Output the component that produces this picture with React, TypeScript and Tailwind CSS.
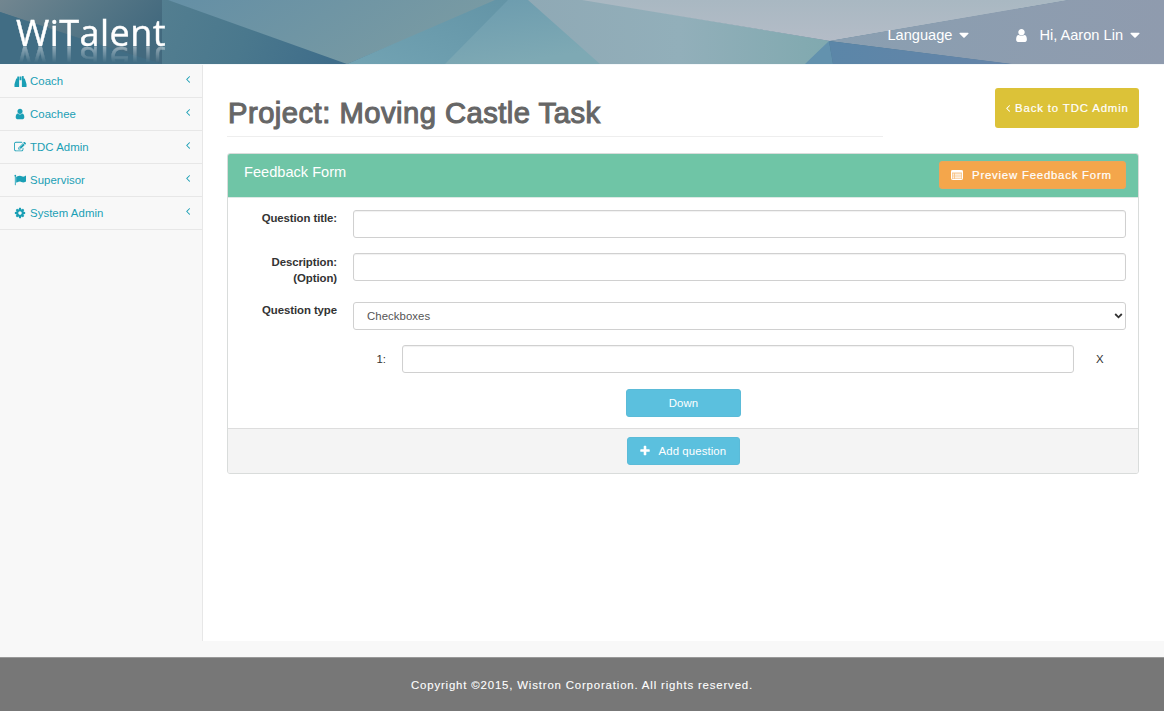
import type { ReactNode } from "react";

type GlyphProps = { d: string; className: string };

function Glyph({ d, className }: GlyphProps) {
  return (
    <svg viewBox="0 0 1792 1792" fill="currentColor" className={className} aria-hidden="true">
      <path d={d} />
    </svg>
  );
}

const BINOCULARS =
  "M704 192v540q0 30 0 164v704q0 26-19 45t-45 19h-512q-26 0-45-19t-19-45v-320l230-768q6-20 26-20h128v-236q0-64 64-64h128q64 0 64 64zm320 0v540h-256v-540zm64 0q0-64 64-64h128q64 0 64 64v300h128q20 0 26 20l230 768v320q0 26-19 45t-45 19h-512q-26 0-45-19t-19-45v-1408z";
const USER =
  "M1536 1399q0 109-62.5 187t-150.5 78h-854q-88 0-150.5-78t-62.5-187q0-85 8.5-160.5t31.5-152 58.5-131 94-89 134.5-34.5q131 128 313 128t313-128q76 0 134.5 34.5t94 89 58.5 131 31.5 152 8.5 160.5zm-256-887q0 159-112.5 271.5t-271.5 112.5-271.5-112.5-112.5-271.5 112.5-271.5 271.5-112.5 271.5 112.5 112.5 271.5z";
const PLUS =
  "M1600 736v192q0 40-28 68t-68 28h-416v416q0 40-28 68t-68 28h-192q-40 0-68-28t-28-68v-416h-416q-40 0-68-28t-28-68v-192q0-40 28-68t68-28h416v-416q0-40 28-68t68-28h192q40 0 68 28t28 68v416h416q40 0 68 28t28 68z";
const ANGLE_LEFT =
  "M1203 544q0 13-10 23l-393 393 393 393q10 10 10 23t-10 23l-50 50q-10 10-23 10t-23-10l-466-466q-10-10-10-23t10-23l466-466q10-10 23-10t23 10l50 50q10 10 10 23z";
const CARET_DOWN =
  "M1408 704q0 26-19 45l-448 448q-19 19-45 19t-45-19l-448-448q-19-19-19-45t19-45 45-19h896q26 0 45 19t19 45z";
const COG =
  "M1152 896q0-106-75-181t-181-75-181 75-75 181 75 181 181 75 181-75 75-181zm512-109v222q0 12-8 23t-20 13l-185 28q-19 54-39 91 35 50 107 138 10 12 10 25t-9 23q-27 37-99 108t-94 71q-12 0-26-9l-138-108q-44 23-91 38-16 136-29 186-7 28-36 28h-222q-14 0-24.5-8.5t-11.5-21.5l-28-184q-49-16-90-37l-141 107q-10 9-25 9-14 0-25-11-126-114-165-168-7-10-7-23 0-12 8-23 15-21 51-66.5t54-70.5q-27-50-41-99l-183-27q-13-2-21-12.5t-8-23.5v-222q0-12 8-23t19-13l186-28q14-46 39-92-40-57-107-138-10-12-10-24 0-10 9-23 26-36 98.5-107.5t94.5-71.5q13 0 26 10l138 107q44-23 91-38 16-136 29-186 7-28 36-28h222q14 0 24.5 8.5t11.5 21.5l28 184q49 16 90 37l142-107q9-9 24-9 13 0 25 10 129 119 165 170 7 8 7 22 0 12-8 23-15 21-51 66.5t-54 70.5q26 50 41 98l183 28q13 2 21 12.5t8 23.5z";
const EDIT =
  "M888 1184l116-116-152-152-116 116v56h96v96h56zm440-720q-16-16-33 1l-350 350q-17 17-1 33t33-1l350-350q17-17 1-33zm80 594v190q0 119-84.5 203.5t-203.5 84.5h-832q-119 0-203.5-84.5t-84.5-203.5v-832q0-119 84.5-203.5t203.5-84.5h832q63 0 117 25 15 7 18 23 3 17-9 29l-49 49q-14 14-32 8-23-6-45-6h-832q-66 0-113 47t-47 113v832q0 66 47 113t113 47h832q66 0 113-47t47-113v-126q0-13 9-22l64-64q15-15 35-7t20 29zm-96-738l288 288-672 672h-288v-288zm444 132l-92 92-288-288 92-92q28-28 68-28t68 28l152 152q28 28 28 68t-28 68z";
const FLAG =
  "M320 256q0 72-64 110v1266q0 13-9.5 22.5t-22.5 9.5h-64q-13 0-22.5-9.5t-9.5-22.5v-1266q-64-38-64-110 0-53 37.5-90.5t90.5-37.5 90.5 37.5 37.5 90.5zm1472 64v763q0 25-12.5 38.5t-39.5 27.5q-215 116-369 116-61 0-123.5-22t-108.5-48-115.5-48-142.5-22q-192 0-464 146-17 9-33 9-26 0-45-19t-19-45v-742q0-32 31-55 21-14 79-43 236-120 421-120 107 0 200 29t219 88q38 19 88 19 54 0 117.5-21t110-47 88-47 54.5-21q26 0 45 19t19 45z";

function HeaderArt() {
  return (
    <svg className="absolute inset-0 h-16 w-full" viewBox="0 0 1164 64" preserveAspectRatio="none" aria-hidden="true">
      <defs>
        <linearGradient id="base" gradientUnits="userSpaceOnUse" x1="162" x2="330" y1="0" y2="64">
          <stop offset="0" stopColor="#537e90" />
          <stop offset="0.5" stopColor="#4a788d" />
          <stop offset="1" stopColor="#3f6d8a" />
        </linearGradient>
        <linearGradient id="dusk" x1="0" x2="1" y1="0" y2="0.4">
          <stop offset="0" stopColor="#728690" />
          <stop offset="0.5" stopColor="#587887" />
          <stop offset="1" stopColor="#42697e" />
        </linearGradient>
        <linearGradient id="sky" x1="0" x2="1" y1="0" y2="0.3">
          <stop offset="0" stopColor="#648fa5" />
          <stop offset="1" stopColor="#7a9ba3" />
        </linearGradient>
        <linearGradient id="teal" x1="0" x2="1" y1="1" y2="0">
          <stop offset="0" stopColor="#72a3b3" />
          <stop offset="1" stopColor="#6394a6" />
        </linearGradient>
        <linearGradient id="sea" x1="0" x2="0.4" y1="0" y2="1">
          <stop offset="0" stopColor="#6b9bae" />
          <stop offset="1" stopColor="#7ea9b4" />
        </linearGradient>
        <linearGradient id="mist" x1="0" x2="1" y1="0" y2="0">
          <stop offset="0" stopColor="#8fa9b5" />
          <stop offset="0.5" stopColor="#92afba" />
          <stop offset="1" stopColor="#80a9af" />
        </linearGradient>
        <linearGradient id="cloud" x1="0" x2="0" y1="0" y2="1">
          <stop offset="0" stopColor="#a9b8c2" />
          <stop offset="1" stopColor="#b4bcc7" />
        </linearGradient>
        <linearGradient id="slate" x1="0" x2="1" y1="0" y2="0">
          <stop offset="0" stopColor="#8a9fb1" />
          <stop offset="1" stopColor="#8f9bae" />
        </linearGradient>
        <linearGradient id="blue" x1="0" x2="1" y1="0" y2="0">
          <stop offset="0" stopColor="#5b86a8" />
          <stop offset="1" stopColor="#6584a8" />
        </linearGradient>
      </defs>
      <rect width="1164" height="64" fill="#42708a" />
      <polygon points="162,0 170,0 347,64 162,64" fill="url(#base)" />
      <polygon points="0,0 162,0 162,64 75,38 0,12" fill="url(#dusk)" />
      <polygon points="0,12 85,40 162,64 0,64" fill="#416d84" />
      <polygon points="168,0 500,0 347,64" fill="url(#sky)" />
      <polygon points="495,0 512,0 452,64 347,64" fill="url(#teal)" />
      <polygon points="508,0 530,0 602,64 445,64" fill="url(#sea)" />
      <polygon points="528,0 588,0 830,41 806,64 600,64" fill="url(#mist)" />
      <polygon points="582,0 1070,0 830,41" fill="url(#cloud)" />
      <polygon points="1068,0 1164,0 1164,64 1010,64 829,41" fill="url(#slate)" />
      <polygon points="829,41 1012,64 833,64" fill="url(#blue)" />
      <polygon points="829,41 833,64 805,64" fill="#6392ae" />
    </svg>
  );
}

function Header() {
  return (
    <header className="relative h-16 shrink-0 overflow-hidden">
      <HeaderArt />
      <div className="relative flex h-16 items-start justify-between">
        <div className="ml-4 mt-[7px] h-[52px] font-['Open_Sans',sans-serif] text-[36px] leading-[52px] tracking-[0.45px] text-white [-webkit-text-stroke:0.4px_white] [-webkit-box-reflect:below_-25px_linear-gradient(transparent_45%,rgba(255,255,255,0.42)_75%,transparent_76%)]">
          WiTalent
        </div>
        <nav className="flex items-center pt-[24px] pr-[21px] text-[14.6px] leading-[22px] text-white">
          <span>Language</span>
          <Glyph d={CARET_DOWN} className="ml-1 size-4" />
          <Glyph d={USER} className="ml-[42px] size-[15px]" />
          <span className="ml-[10px]">Hi, Aaron Lin</span>
          <Glyph d={CARET_DOWN} className="ml-1 size-4" />
        </nav>
      </div>
    </header>
  );
}

const menu: { label: string; icon: ReactNode }[] = [
  { label: "Coach", icon: <Glyph d={BINOCULARS} className="size-[13px] -mr-px" /> },
  { label: "Coachee", icon: <Glyph d={USER} className="size-[12px]" /> },
  { label: "TDC Admin", icon: <Glyph d={EDIT} className="size-[12px]" /> },
  { label: "Supervisor", icon: <Glyph d={FLAG} className="size-[12px]" /> },
  { label: "System Admin", icon: <Glyph d={COG} className="size-[12px]" /> },
];

function Sidebar() {
  return (
    <aside className="w-[203px] shrink-0 border-r border-[#e7e7e7] bg-[#f8f8f8]">
      <ul>
        {menu.map((item) => (
          <li key={item.label} className="flex h-[33px] items-center border-b border-[#e7e7e7] pr-2 pl-[14px] text-[11.4px] text-[#1a9fb5]">
            {item.icon}
            <span className="ml-1 flex-1 pt-[2px] tracking-[0.05px]">{item.label}</span>
            <Glyph d={ANGLE_LEFT} className="mb-[5px] size-[12px]" />
          </li>
        ))}
      </ul>
    </aside>
  );
}

const field = "h-7 rounded-[3px] border border-[#d0d0d0] bg-white shadow-[inset_0_1px_1px_rgba(0,0,0,0.06)] outline-none";

function FeedbackPanel() {
  return (
    <section className="mt-4 overflow-hidden rounded-[3px] border border-[#d9dcdb]">
      <div className="-mx-px -mt-px flex h-11 items-start justify-between border-b border-[#dde9e5] bg-[#6fc5a6] box-content pr-[13px] pl-[17px]">
        <h2 className="pt-[9px] text-[14.6px] leading-[20px] text-white">Feedback Form</h2>
        <button className="mt-[8px] flex h-7 w-[187px] items-center rounded-[3px] border border-[#eea558] bg-[#f4a64b] pl-[11px] text-[11.4px] tracking-[0.78px] text-white">
          <svg viewBox="0 0 12 10" className="h-[10px] w-3" fill="none" stroke="currentColor" aria-hidden="true">
            <rect x="0.5" y="0.5" width="11" height="9" rx="0.7" fill="currentColor" fillOpacity="0.35" />
            <path d="M0.5 1.5h11" strokeWidth="2" />
            <path d="M1.7 4.2h1.4M4 4.2h6.3M1.7 6h1.4M4 6h6.3M1.7 7.8h1.4M4 7.8h6.3" strokeWidth="1" />
          </svg>
          <span className="ml-[9px] whitespace-nowrap pt-[2px] [-webkit-text-stroke:0.2px_white]">Preview Feedback Form</span>
        </button>
      </div>
      <div className="grid grid-cols-[109px_1fr] gap-x-4 pt-3 pr-3 pb-[11px] text-[11.4px] leading-4 text-[#333]">
        <label className="text-right font-bold tracking-[-0.08px]">Question title:</label>
        <input className={field} aria-label="Question title" />
        <label className="mt-4 text-right font-bold tracking-[-0.08px]">
          Description:
          <br />
          (Option)
        </label>
        <input className={`${field} mt-[15px]`} aria-label="Description" />
        <label className="mt-4 text-right font-bold tracking-[-0.08px]">Question type</label>
        <div className="mt-4 flex h-7 items-center justify-between rounded-[3px] border border-[#d0d0d0] bg-white pr-[2px] pl-[13px] text-[#555]">
          <span className="tracking-[0.05px]">Checkboxes</span>
          <svg viewBox="0 0 9 6" className="h-[6px] w-[9px] text-[#333]" fill="none" stroke="currentColor" strokeWidth="1.8" aria-hidden="true">
            <path d="M1.2 1L4.5 4.3L7.8 1" />
          </svg>
        </div>
        <div className="col-start-2 mt-[15px] flex items-center">
          <span className="w-[33px] text-right">1:</span>
          <input className={`${field} ml-[16px] w-[672px]`} aria-label="Option 1" />
          <span className="ml-[22px]">X</span>
        </div>
        <div className="col-span-2 mt-4 flex justify-center pl-[13px]">
          <button className="h-7 w-[115px] rounded-[3px] border border-[#5bbbd8] bg-[#5bc0de] tracking-[0.1px] text-white">Down</button>
        </div>
      </div>
      <div className="flex h-[45px] items-start justify-center border-t border-[#ddd] bg-[#f4f4f4] pt-[8px]">
        <button className="flex h-7 w-[113px] items-center rounded-[3px] border border-[#5bbbd8] bg-[#5bc0de] pl-[11px] text-[11.4px] text-white">
          <Glyph d={PLUS} className="size-3" />
          <span className="ml-[8px] whitespace-nowrap pt-px tracking-[0.1px]">Add question</span>
        </button>
      </div>
    </section>
  );
}

export default function App() {
  return (
    <div className="flex h-[711px] flex-col overflow-hidden bg-[#f8f8f8] font-['Liberation_Sans',Arial,sans-serif]">
      <Header />
      <div className="flex h-[577px] shrink-0 border-t border-[#f4f8fa]">
        <Sidebar />
        <main className="flex-1 bg-white pr-[25px] pl-[24px]">
          <div className="flex items-start justify-between pt-[23px]">
            <h1 className="h-[49px] w-[656px] border-b border-[#eee] pt-[7px] pl-px text-[29.2px] leading-[36px] tracking-[0.48px] whitespace-nowrap text-[#666] [-webkit-text-stroke:1.1px_#666]">
              Project: Moving Castle Task
            </h1>
            <button className="flex h-10 w-36 items-center rounded-[3px] bg-[#dcc238] pl-[7px] text-[11.4px] tracking-[0.86px] text-white">
              <Glyph d={ANGLE_LEFT} className="size-[12px]" />
              <span className="ml-px whitespace-nowrap pt-px [-webkit-text-stroke:0.2px_white]">Back to TDC Admin</span>
            </button>
          </div>
          <FeedbackPanel />
        </main>
      </div>
      <footer className="mt-4 flex flex-1 items-center justify-center border-t border-[#999] bg-[#777] pt-[2px] text-[11.4px] tracking-[0.84px] text-white [-webkit-text-stroke:0.1px_white]">
        Copyright ©2015, Wistron Corporation. All rights reserved.
      </footer>
    </div>
  );
}
